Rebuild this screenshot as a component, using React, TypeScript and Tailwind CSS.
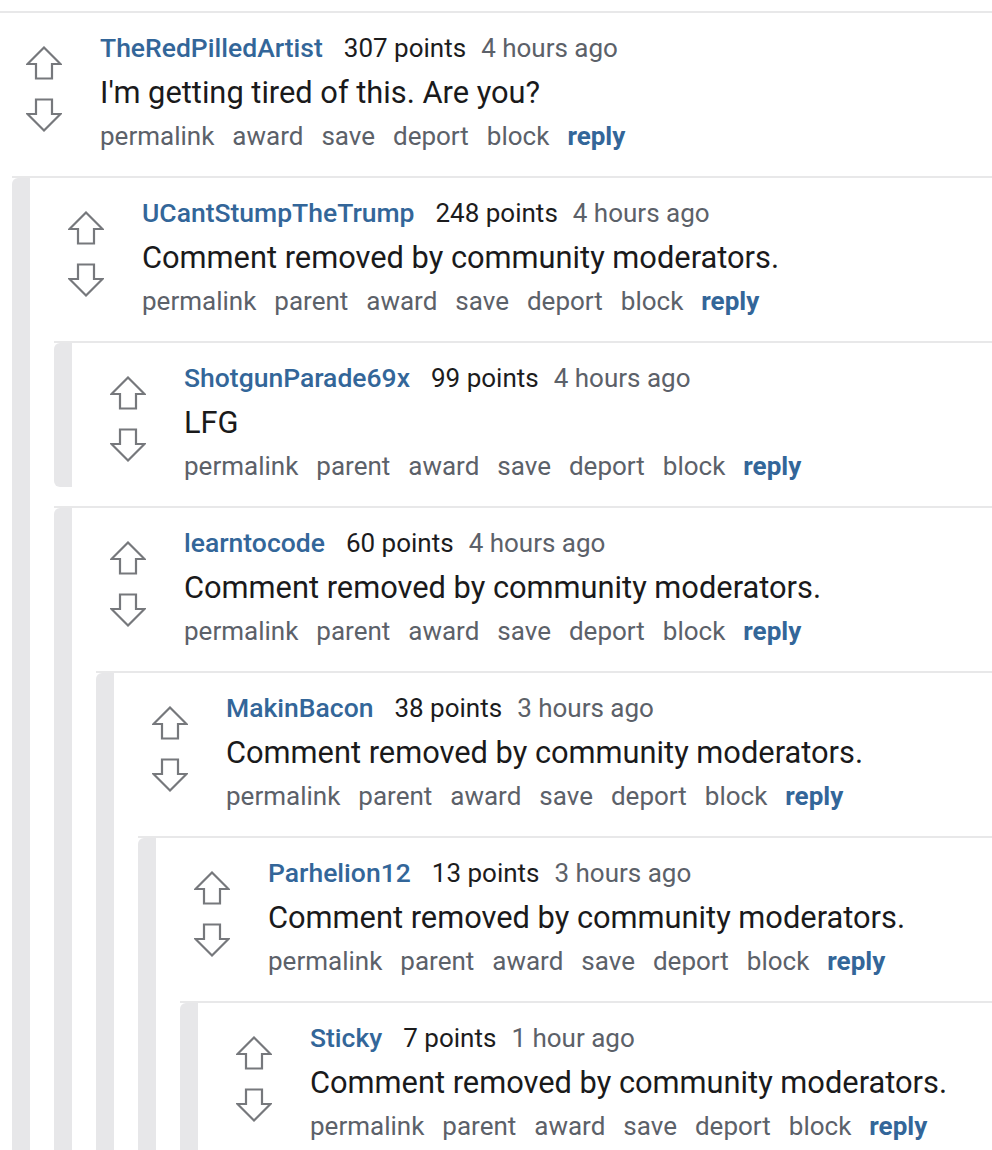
import React from "react";

interface CommentData {
  id: string;
  author: string;
  points: number;
  time: string;
  body: string;
  children?: CommentData[];
}

const thread: CommentData = {
  id: "c1",
  author: "TheRedPilledArtist",
  points: 307,
  time: "4 hours ago",
  body: "I'm getting tired of this. Are you?",
  children: [
    {
      id: "c2",
      author: "UCantStumpTheTrump",
      points: 248,
      time: "4 hours ago",
      body: "Comment removed by community moderators.",
      children: [
        {
          id: "c3",
          author: "ShotgunParade69x",
          points: 99,
          time: "4 hours ago",
          body: "LFG",
        },
        {
          id: "c4",
          author: "learntocode",
          points: 60,
          time: "4 hours ago",
          body: "Comment removed by community moderators.",
          children: [
            {
              id: "c5",
              author: "MakinBacon",
              points: 38,
              time: "3 hours ago",
              body: "Comment removed by community moderators.",
              children: [
                {
                  id: "c6",
                  author: "Parhelion12",
                  points: 13,
                  time: "3 hours ago",
                  body: "Comment removed by community moderators.",
                  children: [
                    {
                      id: "c7",
                      author: "Sticky",
                      points: 7,
                      time: "1 hour ago",
                      body: "Comment removed by community moderators.",
                    },
                  ],
                },
              ],
            },
          ],
        },
      ],
    },
  ],
};

const VoteArrow: React.FC<{ down?: boolean }> = ({ down }) => (
  <svg
    width="36"
    height="34"
    viewBox="0 0 36 34"
    className={down ? "rotate-180" : ""}
  >
    <path
      d="M18 1.5 L34.5 18 L26 18 L26 32.5 L10 32.5 L10 18 L1.5 18 Z"
      fill="none"
      stroke="#76787c"
      strokeWidth="2.2"
      strokeLinejoin="miter"
    />
  </svg>
);

const Comment: React.FC<{ comment: CommentData; isRoot?: boolean }> = ({
  comment,
  isRoot,
}) => {
  const actions = isRoot
    ? ["permalink", "award", "save", "deport", "block"]
    : ["permalink", "parent", "award", "save", "deport", "block"];
  const isLeafAtEnd = comment.id === "c7";

  return (
    <div className={`${isRoot ? "mt-[11px]" : "mt-[19px]"} border-t-2 border-[#e8e8e9]`}>
      <div className="flex">
        <div className="w-[18px] shrink-0 rounded-l-[6px] bg-[#e7e7e9]" />
        <div className={`flex-1 ${isLeafAtEnd ? "pb-[60px]" : ""}`}>
          <div className="flex h-[144px]">
            <div className="ml-[38px] flex w-[36px] flex-col pt-[33px]">
              <VoteArrow />
              <div className="mt-[18px]">
                <VoteArrow down />
              </div>
            </div>
            <div className="ml-[38px] pt-[12px]">
              <div className="flex h-[46px] items-center whitespace-nowrap text-[26px]">
                <span className="text-[26.5px] font-medium text-[#336699]">{comment.author}</span>
                <span className="ml-[21px] text-[#1c1c1d]">{comment.points} points</span>
                <span className="ml-[15px] text-[#5c6169]">{comment.time}</span>
              </div>
              <div className="flex h-[44px] items-center whitespace-nowrap text-[30.8px] text-[#1a1a1b]">
                {comment.body}
              </div>
              <div className="flex h-[42px] items-center gap-[18px] whitespace-nowrap text-[26px] text-[#5c6169]">
                {actions.map((a) => (
                  <span key={a}>{a}</span>
                ))}
                <span className="font-bold text-[#336699]">reply</span>
              </div>
            </div>
          </div>
          {comment.children && (
            <div className="ml-[24px]">
              {comment.children.map((child) => (
                <Comment key={child.id} comment={child} />
              ))}
            </div>
          )}
        </div>
      </div>
    </div>
  );
};

export default function App() {
  return (
    <div
      className="h-[1150px] w-full overflow-hidden bg-white"
      style={{ fontFamily: "Roboto, 'Noto Sans', sans-serif" }}
    >
      <div className="ml-[-30px]">
        <Comment comment={thread} isRoot />
      </div>
    </div>
  );
}
